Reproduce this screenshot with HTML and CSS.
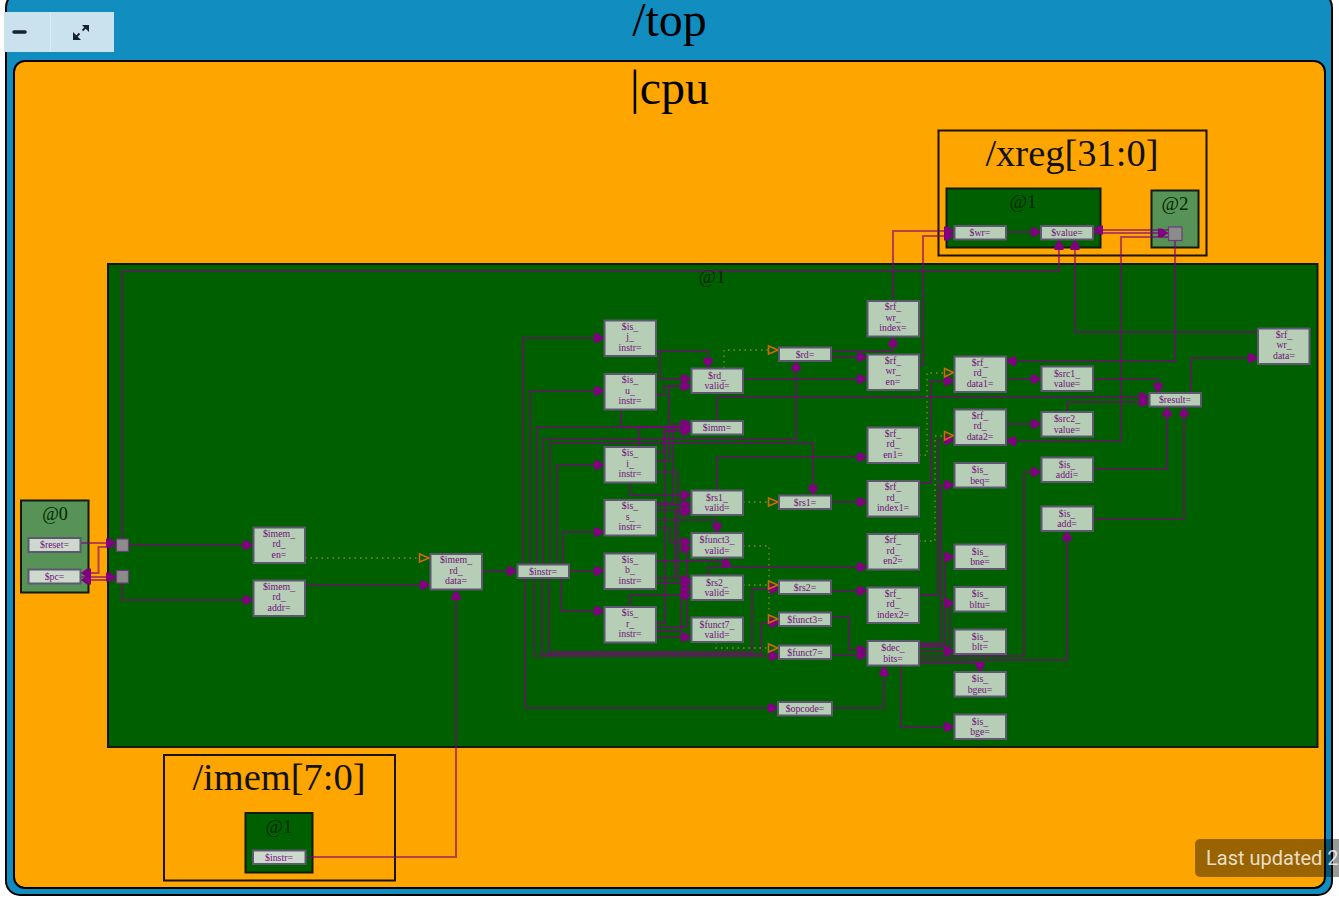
FILE: index.html
```html
<!DOCTYPE html>
<html lang="en">
<head>
<meta charset="utf-8">
<title>/top</title>
<link rel="stylesheet" href="styles.css">
</head>
<body>
<main class="stage">
  <section class="top">
    <h1 class="top-title">/top</h1>
    <section class="cpu">
      <h2 class="cpu-title">|cpu</h2>
    </section>
  </section>

  <svg class="diagram" width="1339" height="898" viewBox="0 0 1339 898" aria-label="Pipeline diagram">
    <defs>
      <marker id="a" markerUnits="userSpaceOnUse" markerWidth="11" markerHeight="10" refX="10" refY="5" orient="auto">
        <path class="head" d="M0 .5 L4 .5 L10 5 L4 9.500 L0 9.500Z"/>
      </marker>
    </defs>

    <!-- scopes -->
    <rect class="scope" x="938.5" y="130.5" width="268" height="125"/>
    <text class="scope-title" x="1072" y="166">/xreg[31:0]</text>
    <rect class="stage1" x="946.5" y="188.5" width="154" height="59"/>
    <text class="at" x="1023" y="208">@1</text>
    <rect class="stage2" x="1151.5" y="190.5" width="47" height="57"/>
    <text class="at" x="1175" y="210">@2</text>

    <rect class="stage1" x="108" y="264" width="1209.5" height="483"/>
    <text class="at" x="712" y="283">@1</text>

    <rect class="stage2" x="21" y="500.5" width="67.5" height="92"/>
    <text class="at at0" x="55" y="520">@0</text>

    <rect class="scope" x="164" y="755" width="231" height="125.5"/>
    <text class="scope-title" x="279" y="790">/imem[7:0]</text>
    <rect class="stage1" x="245.5" y="813" width="67" height="59.5"/>
    <text class="at" x="279" y="833">@1</text>

    <!-- wires -->
    <g class="wires">
      <path class="w" d="M81 543H116"/>
      <path class="w" d="M128 545H253"/>
      <path class="w" d="M116 547H98.500V573H81"/>
      <path class="w" d="M81 577H116"/>
      <path class="w" d="M116 580H81"/>
      <path class="w" d="M122 583V600H253"/>
      <path class="w" d="M122 539V271H1059V240"/>
      <path class="w" d="M1258 332H1075V240"/>
      <path class="w" d="M305 585H430"/>
      <path class="w" d="M305 857H456V590"/>
      <path class="w" d="M482 571H517"/>

      <path class="w" d="M523 564V338H604"/>
      <path class="w" d="M530 564V391H604"/>
      <path class="w" d="M537 564V427H691"/>
      <path class="w" d="M543 564V439H796V361"/>
      <path class="w" d="M550 564V443H813V495"/>
      <path class="w" d="M557 564V465H604"/>
      <path class="w" d="M563 564V532H604"/>
      <path class="w" d="M569 571H604"/>
      <path class="w" d="M561 578V611H604"/>
      <path class="w" d="M525 578V708H778"/>
      <path class="w" d="M534 578V656H779"/>
      <path class="w" d="M542 578V654H761V623H779"/>
      <path class="w" d="M549 578V652H752V589H779"/>

      <path class="w" d="M656 351H708V368"/>
      <path class="w" d="M660 351V379H691"/>
      <path class="w" d="M656 395H664V386H691"/>
      <path class="w" d="M621 409V427H691"/>
      <path class="w" d="M639 447V427H691"/>
      <path class="w" d="M656 452H664V431H691"/>
      <path class="w" d="M656 461H669V386H691"/>
      <path class="w" d="M656 505H673V424H691"/>
      <path class="w" d="M656 623H665V430H691"/>
      <path class="w" d="M656 472H678V580H691"/>
      <path class="w" d="M630 483V495H691"/>
      <path class="w" d="M656 510H691"/>
      <path class="w" d="M656 503H672V505H691"/>
      <path class="w" d="M656 520H717V533"/>
      <path class="w" d="M656 528H670V542H691"/>
      <path class="w" d="M656 561H726V557"/>
      <path class="w" d="M656 583H691"/>
      <path class="w" d="M656 578H675V512H691"/>
      <path class="w" d="M656 627H687V548H691"/>
      <path class="w" d="M656 631H681V589H691"/>
      <path class="w" d="M656 637H691"/>
      <path class="w" d="M630 607V595H691"/>

      <path class="w" d="M717 421V397H1149"/>
      <path class="w" d="M743 379H867"/>
      <path class="w" d="M717 490V457H867"/>
      <path class="w" d="M708 575V567H867"/>
      <path class="w" d="M831 351H893V337"/>
      <path class="w" d="M831 357H867"/>
      <path class="w" d="M831 502H867"/>
      <path class="w" d="M831 591H867"/>
      <path class="w" d="M831 617H849V650H867"/>
      <path class="w" d="M831 655H867"/>
      <path class="w" d="M832 708H884V666"/>

      <path class="w" d="M893 301V231H954"/>
      <path class="w" d="M919 365H923V236H954"/>
      <path class="w" d="M1006 232H1041"/>
      <path class="w" d="M1168 230H1093"/>
      <path class="w" d="M1093 233H1168"/>
      <path class="w" d="M1168 237H1121V441H1006"/>
      <path class="w" d="M1175 241V361H1006"/>

      <path class="w" d="M919 483H931V381H954"/>
      <path class="w" d="M919 595H938V440H954"/>
      <path class="w" d="M919 643H941V485H954"/>
      <path class="w" d="M919 645H945V557H954"/>
      <path class="w" d="M919 647H950V603H954"/>
      <path class="w" d="M919 651H954"/>
      <path class="w" d="M919 656H1024V472H1041"/>
      <path class="w" d="M919 660H1067V531"/>
      <path class="w" d="M919 663H980V672"/>
      <path class="w" d="M901 666V727H954"/>

      <path class="w" d="M1006 379H1041"/>
      <path class="w" d="M1006 424H1041"/>
      <path class="w" d="M1093 379H1158V393"/>
      <path class="w" d="M1067 412V402H1149"/>
      <path class="w" d="M1093 469H1167V407"/>
      <path class="w" d="M1093 519H1184V407"/>
      <path class="w" d="M1191 393V358H1258"/>
    </g>

    <!-- dotted "when" conditions -->
    <g class="dots">
      <path d="M305 558H420"/>
      <path d="M724 368V350H768"/>
      <path d="M743 502H768"/>
      <path d="M743 546H769V610"/>
      <path d="M743 585H768"/>
      <path d="M716 642V648H768"/>
      <path d="M919 455H927V373H944"/>
      <path d="M919 541H935V436H944"/>
    </g>
    <g class="when">
      <path d="M419.500 554V562L429 558Z"/>
      <path d="M768.500 346V354L778 350Z"/>
      <path d="M768.500 498V506L778 502Z"/>
      <path d="M768.500 581V589L778 585Z"/>
      <path d="M768.500 615V623L778 619Z"/>
      <path d="M768.500 644V652L778 648Z"/>
      <path d="M944.500 368.500V377L953.500 372.500Z"/>
      <path d="M944.500 431.500V440L953.500 435.500Z"/>
    </g>

    <!-- pass-through squares -->
    <rect class="sq" x="116.500" y="539" width="12" height="12.500"/>
    <rect class="sq" x="116.500" y="570.500" width="12" height="12.500"/>
    <rect class="sq" x="1168.500" y="227" width="13.500" height="13.500"/>

    <!-- nodes -->
    <g class="nodes">
      <rect class="n pale" x="28.500" y="538" width="52" height="14"/><text class="l" x="54.500" y="547.500">$reset=</text>
      <rect class="n pale" x="28.500" y="569.500" width="52" height="14"/><text class="l" x="54.500" y="579">$pc=</text>
      <rect class="n" x="253.500" y="527.500" width="51.500" height="35.500"/><text class="l" x="279" y="536"><tspan x="279">$imem_</tspan><tspan x="279" dy="10.500">rd_</tspan><tspan x="279" dy="10.500">en=</tspan></text>
      <rect class="n" x="253.500" y="580.500" width="51.500" height="35.500"/><text class="l" x="279" y="589"><tspan x="279">$imem_</tspan><tspan x="279" dy="10.500">rd_</tspan><tspan x="279" dy="10.500">addr=</tspan></text>
      <rect class="n" x="430.500" y="554" width="51.500" height="35.500"/><text class="l" x="456" y="562.500"><tspan x="456">$imem_</tspan><tspan x="456" dy="10.500">rd_</tspan><tspan x="456" dy="10.500">data=</tspan></text>
      <rect class="n" x="517.500" y="564.500" width="51.500" height="13.500"/><text class="l" x="543" y="574">$instr=</text>

      <rect class="n" x="604.500" y="320.500" width="51.500" height="35.500"/><text class="l" x="630" y="329"><tspan x="630">$is_</tspan><tspan x="630" dy="10.500">j_</tspan><tspan x="630" dy="10.500">instr=</tspan></text>
      <rect class="n" x="604.500" y="374" width="51.500" height="35.500"/><text class="l" x="630" y="382.500"><tspan x="630">$is_</tspan><tspan x="630" dy="10.500">u_</tspan><tspan x="630" dy="10.500">instr=</tspan></text>
      <rect class="n" x="604.500" y="447" width="51.500" height="35.500"/><text class="l" x="630" y="455.500"><tspan x="630">$is_</tspan><tspan x="630" dy="10.500">i_</tspan><tspan x="630" dy="10.500">instr=</tspan></text>
      <rect class="n" x="604.500" y="500" width="51.500" height="35.500"/><text class="l" x="630" y="508.500"><tspan x="630">$is_</tspan><tspan x="630" dy="10.500">s_</tspan><tspan x="630" dy="10.500">instr=</tspan></text>
      <rect class="n" x="604.500" y="553.500" width="51.500" height="35.500"/><text class="l" x="630" y="562"><tspan x="630">$is_</tspan><tspan x="630" dy="10.500">b_</tspan><tspan x="630" dy="10.500">instr=</tspan></text>
      <rect class="n" x="604.500" y="607" width="51.500" height="35.500"/><text class="l" x="630" y="615.500"><tspan x="630">$is_</tspan><tspan x="630" dy="10.500">r_</tspan><tspan x="630" dy="10.500">instr=</tspan></text>

      <rect class="n" x="691.500" y="368.500" width="51.500" height="24.500"/><text class="l" x="717" y="378"><tspan x="717">$rd_</tspan><tspan x="717" dy="10.500">valid=</tspan></text>
      <rect class="n" x="691.500" y="421" width="51.500" height="13.500"/><text class="l" x="717" y="430.500">$imm=</text>
      <rect class="n" x="691.500" y="490.500" width="51.500" height="24.500"/><text class="l" x="717" y="500"><tspan x="717">$rs1_</tspan><tspan x="717" dy="10.500">valid=</tspan></text>
      <rect class="n" x="691.500" y="533" width="51.500" height="24.500"/><text class="l" x="717" y="542.500"><tspan x="717">$funct3_</tspan><tspan x="717" dy="10.500">valid=</tspan></text>
      <rect class="n" x="691.500" y="575.500" width="51.500" height="24.500"/><text class="l" x="717" y="585"><tspan x="717">$rs2_</tspan><tspan x="717" dy="10.500">valid=</tspan></text>
      <rect class="n" x="691.500" y="617.500" width="51.500" height="24.500"/><text class="l" x="717" y="627"><tspan x="717">$funct7_</tspan><tspan x="717" dy="10.500">valid=</tspan></text>

      <rect class="n" x="779" y="347.500" width="52" height="13.500"/><text class="l" x="805" y="357">$rd=</text>
      <rect class="n" x="779" y="495.500" width="52" height="13.500"/><text class="l" x="805" y="505">$rs1=</text>
      <rect class="n" x="779" y="580.500" width="52" height="13.500"/><text class="l" x="805" y="590">$rs2=</text>
      <rect class="n" x="779" y="612.500" width="52" height="13.500"/><text class="l" x="805" y="622">$funct3=</text>
      <rect class="n" x="779" y="645.500" width="52" height="13.500"/><text class="l" x="805" y="655">$funct7=</text>
      <rect class="n" x="778" y="702" width="54" height="13.500"/><text class="l" x="805" y="711.500">$opcode=</text>

      <rect class="n" x="867.500" y="301" width="51.500" height="35.500"/><text class="l" x="893" y="309.500"><tspan x="893">$rf_</tspan><tspan x="893" dy="10.500">wr_</tspan><tspan x="893" dy="10.500">index=</tspan></text>
      <rect class="n" x="867.500" y="354.500" width="51.500" height="35.500"/><text class="l" x="893" y="363"><tspan x="893">$rf_</tspan><tspan x="893" dy="10.500">wr_</tspan><tspan x="893" dy="10.500">en=</tspan></text>
      <rect class="n" x="867.500" y="427.500" width="51.500" height="35.500"/><text class="l" x="893" y="436"><tspan x="893">$rf_</tspan><tspan x="893" dy="10.500">rd_</tspan><tspan x="893" dy="10.500">en1=</tspan></text>
      <rect class="n" x="867.500" y="481" width="51.500" height="35.500"/><text class="l" x="893" y="489.500"><tspan x="893">$rf_</tspan><tspan x="893" dy="10.500">rd_</tspan><tspan x="893" dy="10.500">index1=</tspan></text>
      <rect class="n" x="867.500" y="534" width="51.500" height="35.500"/><text class="l" x="893" y="542.500"><tspan x="893">$rf_</tspan><tspan x="893" dy="10.500">rd_</tspan><tspan x="893" dy="10.500">en2=</tspan></text>
      <rect class="n" x="867.500" y="587.500" width="51.500" height="35.500"/><text class="l" x="893" y="596"><tspan x="893">$rf_</tspan><tspan x="893" dy="10.500">rd_</tspan><tspan x="893" dy="10.500">index2=</tspan></text>
      <rect class="n" x="867.500" y="641" width="51.500" height="24.500"/><text class="l" x="893" y="650.500"><tspan x="893">$dec_</tspan><tspan x="893" dy="10.500">bits=</tspan></text>

      <rect class="n" x="954.500" y="356.500" width="51.500" height="35.500"/><text class="l" x="980" y="365"><tspan x="980">$rf_</tspan><tspan x="980" dy="10.500">rd_</tspan><tspan x="980" dy="10.500">data1=</tspan></text>
      <rect class="n" x="954.500" y="409.500" width="51.500" height="35.500"/><text class="l" x="980" y="418"><tspan x="980">$rf_</tspan><tspan x="980" dy="10.500">rd_</tspan><tspan x="980" dy="10.500">data2=</tspan></text>
      <rect class="n" x="954.500" y="463" width="51.500" height="24.500"/><text class="l" x="980" y="472.500"><tspan x="980">$is_</tspan><tspan x="980" dy="10.500">beq=</tspan></text>
      <rect class="n" x="954.500" y="544.500" width="51.500" height="24.500"/><text class="l" x="980" y="554"><tspan x="980">$is_</tspan><tspan x="980" dy="10.500">bne=</tspan></text>
      <rect class="n" x="954.500" y="587" width="51.500" height="24.500"/><text class="l" x="980" y="596.500"><tspan x="980">$is_</tspan><tspan x="980" dy="10.500">bltu=</tspan></text>
      <rect class="n" x="954.500" y="629.500" width="51.500" height="24.500"/><text class="l" x="980" y="639"><tspan x="980">$is_</tspan><tspan x="980" dy="10.500">blt=</tspan></text>
      <rect class="n" x="954.500" y="672" width="51.500" height="24.500"/><text class="l" x="980" y="681.500"><tspan x="980">$is_</tspan><tspan x="980" dy="10.500">bgeu=</tspan></text>
      <rect class="n" x="954.500" y="714.500" width="51.500" height="24.500"/><text class="l" x="980" y="724"><tspan x="980">$is_</tspan><tspan x="980" dy="10.500">bge=</tspan></text>

      <rect class="n" x="1041.500" y="366.500" width="51.500" height="24.500"/><text class="l" x="1067" y="376"><tspan x="1067">$src1_</tspan><tspan x="1067" dy="10.500">value=</tspan></text>
      <rect class="n" x="1041.500" y="412" width="51.500" height="24.500"/><text class="l" x="1067" y="421.500"><tspan x="1067">$src2_</tspan><tspan x="1067" dy="10.500">value=</tspan></text>
      <rect class="n" x="1041.500" y="457.500" width="51.500" height="24.500"/><text class="l" x="1067" y="467"><tspan x="1067">$is_</tspan><tspan x="1067" dy="10.500">addi=</tspan></text>
      <rect class="n" x="1041.500" y="506.500" width="51.500" height="24.500"/><text class="l" x="1067" y="516"><tspan x="1067">$is_</tspan><tspan x="1067" dy="10.500">add=</tspan></text>
      <rect class="n" x="1149.500" y="393" width="51.500" height="13.500"/><text class="l" x="1175" y="402.500">$result=</text>
      <rect class="n" x="1258" y="328.500" width="51.500" height="35.500"/><text class="l" x="1284" y="337"><tspan x="1284">$rf_</tspan><tspan x="1284" dy="10.500">wr_</tspan><tspan x="1284" dy="10.500">data=</tspan></text>

      <rect class="n" x="954.500" y="226" width="51.500" height="13.500"/><text class="l" x="980" y="235.500">$wr=</text>
      <rect class="n" x="1041" y="226" width="52" height="13.500"/><text class="l" x="1067" y="235.500">$value=</text>
      <rect class="n pale" x="253" y="850.500" width="52.500" height="13.500"/><text class="l" x="279" y="860">$instr=</text>
    </g>
  </svg>

  <div class="controls">
    <button class="ctl ctl-min" type="button" aria-label="Collapse">
      <svg class="ico" width="16" height="16" viewBox="0 0 16 16"><path class="minus" d="M2 8H13"/></svg>
    </button>
    <button class="ctl ctl-full" type="button" aria-label="Fullscreen">
      <svg class="ico" width="18" height="18" viewBox="0 0 18 18"><path class="arrow" d="M3 15L7.500 10.500M10.500 7.500L15 3"/><path class="tip" d="M10 2H17V9ZM1 9V17H9Z"/></svg>
    </button>
  </div>

  <div class="toast">Last updated 2</div>
</main>
</body>
</html>
```

FILE: styles.css
```css
html, body {
  margin: 0;
  padding: 0;
  background: #fff;
}

.stage {
  position: relative;
  width: 1339px;
  height: 898px;
  overflow: hidden;
  font-family: "Liberation Serif", "Times New Roman", serif;
}

.top {
  box-sizing: border-box;
  display: flex;
  flex-direction: column;
  width: 1328px;
  height: 904px;
  margin: -8px 0 0 5px;
  padding: 6px 5px 5px 6px;
  border: 2px solid #000;
  border-radius: 15px;
  background: #118dc0;
}

.top-title {
  height: 60px;
  margin: 0;
  color: #000;
  font-size: 48px;
  font-weight: 400;
  line-height: 40px;
  text-align: center;
}

.cpu {
  flex: 1;
  border: 2.5px solid #000;
  border-radius: 12px;
  background: #ffa500;
}

.cpu-title {
  margin: 0;
  color: #000;
  font-size: 48px;
  font-weight: 400;
  line-height: 51px;
  text-align: center;
}

.diagram {
  position: absolute;
  top: 0;
  left: 0;
  display: block;
}

.scope {
  fill: none;
  stroke: #1a1300;
  stroke-width: 2;
}

.scope-title {
  fill: #111;
  font-size: 38.500px;
  text-anchor: middle;
}

.stage1 {
  fill: #006000;
  stroke: #101a10;
  stroke-width: 2;
}

.stage2 {
  fill: #579257;
  stroke: #101a10;
  stroke-width: 2;
}

.at {
  fill: #002800;
  font-size: 19px;
  text-anchor: middle;
}

.at0 {
  font-size: 18px;
}

.wires .w {
  fill: none;
  stroke: #800080;
  stroke-opacity: 0.6;
  stroke-width: 2.100;
  marker-end: url(#a);
}

.head {
  fill: #800080;
}

.dots path {
  fill: none;
  stroke: #8a8a10;
  stroke-width: 1.3;
  stroke-dasharray: 1.5 4;
}

.when path {
  fill: none;
  stroke: #d2690a;
  stroke-width: 1.5;
}

.sq {
  fill: #8c8c8c;
  stroke: #6b3c78;
  stroke-width: 1.2;
}

.n {
  fill: #b6cdb6;
  stroke: #5d5870;
  stroke-width: 2;
}

.pale {
  fill: #ced9ce;
}

.l {
  fill: #72127a;
  font-size: 9.800px;
  text-anchor: middle;
  transform: translateY(0.5px);
}

.controls {
  position: absolute;
  top: 12px;
  left: 4px;
  display: flex;
  width: 110px;
  height: 40px;
  background: #c9e2ee;
}

.ctl {
  display: flex;
  align-items: center;
  justify-content: center;
  height: 40px;
  margin: 0;
  padding: 0;
  border: 0;
  background: transparent;
}

.ctl-min {
  justify-content: flex-start;
  width: 47px;
  padding-left: 8px;
  border-right: 1px solid #d9ecf5;
}

.ctl-full {
  width: 60px;
}

.ico {
  display: block;
}

.minus {
  fill: none;
  stroke: #16222c;
  stroke-width: 3.500;
  stroke-linecap: round;
}

.arrow {
  fill: none;
  stroke: #16222c;
  stroke-width: 1.8;
}

.tip {
  fill: #16222c;
}

.toast {
  position: absolute;
  top: 839px;
  left: 1195px;
  box-sizing: border-box;
  width: 190px;
  height: 38px;
  padding-left: 11px;
  border-radius: 5px;
  background: rgba(0, 0, 0, 0.4);
  color: rgba(255, 255, 255, 0.8);
  font-family: Roboto, "Liberation Sans", sans-serif;
  font-size: 20px;
  line-height: 38px;
  white-space: nowrap;
}
```
